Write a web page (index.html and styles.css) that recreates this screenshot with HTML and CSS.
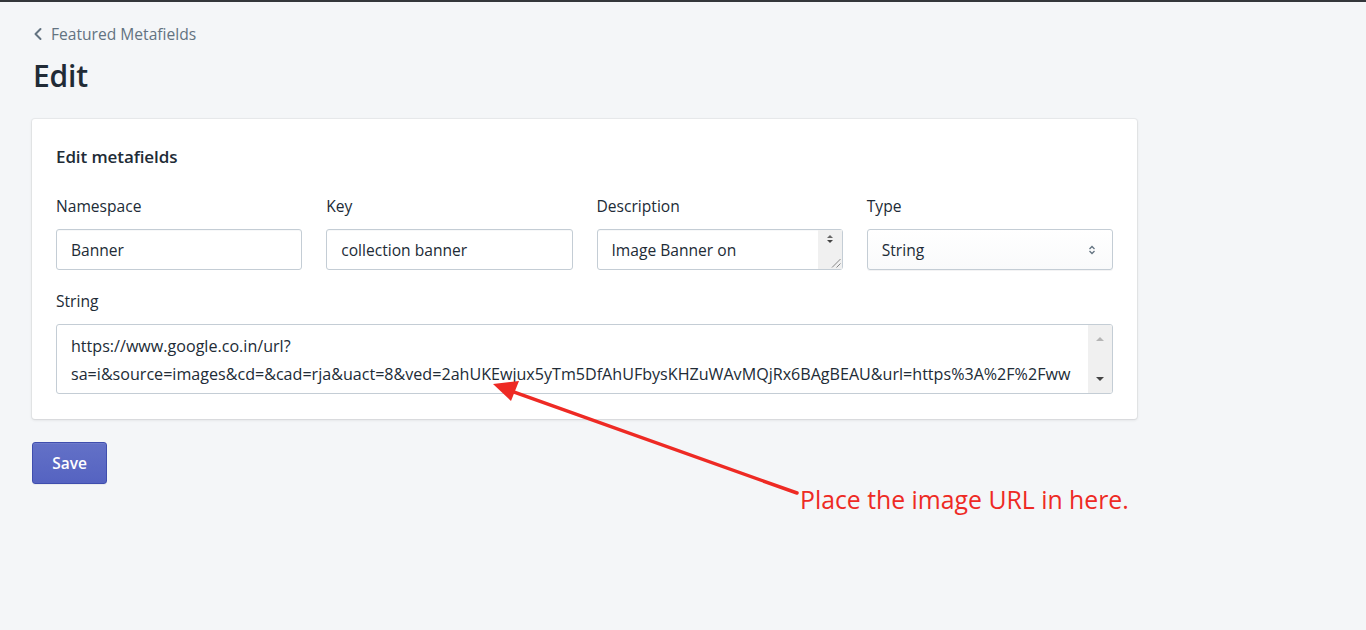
FILE: index.html
```html
<!DOCTYPE html>
<html lang="en">
<head>
<meta charset="utf-8">
<title>Edit metafields</title>
<link rel="stylesheet" href="styles.css">
</head>
<body>
<div class="page">
  <a class="breadcrumb" href="#">
    <svg class="chev" width="10" height="14" viewBox="0 0 10 14"><path d="M7.5 2 L2.5 7 L7.5 12" fill="none" stroke="#637381" stroke-width="2" stroke-linecap="round" stroke-linejoin="round"/></svg>
    <span>Featured Metafields</span>
  </a>
  <h1 class="title">Edit</h1>

  <section class="card">
    <h2 class="card-title">Edit metafields</h2>
    <div class="grid">
      <div class="field">
        <label class="label">Namespace</label>
        <div class="input">Banner</div>
      </div>
      <div class="field">
        <label class="label">Key</label>
        <div class="input">collection banner</div>
      </div>
      <div class="field">
        <label class="label">Description</label>
        <div class="input input-area">
          <span>Image Banner on</span>
          <div class="mini-scroll">
            <svg width="8" height="12" viewBox="0 0 8 12"><path d="M1 5 L4 2 L7 5 Z" fill="#666"/><path d="M1 7 L4 10 L7 7 Z" fill="#444"/></svg>
            <svg class="grip" width="14" height="14" viewBox="0 0 14 14"><path d="M12.5 4 L4 12.5 M12.5 8.5 L8.5 12.5" stroke="#888" stroke-width="1"/></svg>
          </div>
        </div>
      </div>
      <div class="field">
        <label class="label">Type</label>
        <div class="input select">
          <span>String</span>
          <svg width="8" height="12" viewBox="0 0 8 12"><path d="M1.5 5 L4 2.5 L6.5 5" fill="none" stroke="#637381" stroke-width="1.3"/><path d="M1.5 7 L4 9.5 L6.5 7" fill="none" stroke="#637381" stroke-width="1.3"/></svg>
        </div>
      </div>
    </div>

    <div class="field field-wide">
      <label class="label">String</label>
      <div class="textarea">
        <div class="ta-text">
          <div class="ta-line">https://www.google.co.in/url?</div>
          <div class="ta-line">sa=i&amp;source=images&amp;cd=&amp;cad=rja&amp;uact=8&amp;ved=2ahUKEwjux5yTm5DfAhUFbysKHZuWAvMQjRx6BAgBEAU&amp;url=https%3A%2F%2Fww</div>
        </div>
        <div class="scrollbar">
          <svg width="10" height="8" viewBox="0 0 10 8"><path d="M1 6 L5 2 L9 6 Z" fill="#b5b5b5"/></svg>
          <svg width="10" height="8" viewBox="0 0 10 8"><path d="M1 2 L5 6 L9 2 Z" fill="#444"/></svg>
        </div>
      </div>
    </div>
  </section>

  <button class="btn" type="button">Save</button>
</div>

<svg class="annot-arrow" width="1366" height="630" viewBox="0 0 1366 630">
  <line x1="797" y1="493" x2="508" y2="390" stroke="#ee2a24" stroke-width="3.5" stroke-linecap="round"/>
  <path d="M493 384 L519 381 L511 401 Z" fill="#ee2a24"/>
</svg>
<div class="annot-text">Place the image URL in here.</div>
</body>
</html>
```

FILE: styles.css
```css
html, body {
  margin: 0;
  padding: 0;
}
body {
  background: #f4f6f8;
  border-top: 2px solid #33373b;
  font-family: "Open Sans", "Noto Sans", sans-serif;
  color: #212b36;
  min-height: 628px;
  position: relative;
  overflow: hidden;
}
.page {
  padding: 22px 32px 0 32px;
}
.breadcrumb {
  display: flex;
  align-items: center;
  gap: 8px;
  color: #637381;
  text-decoration: none;
  font-size: 15.6px;
  height: 20px;
}
.chev {
  margin-left: 1px;
}
.title {
  margin: 14px 0 0 1px;
  font-size: 30px;
  font-weight: 600;
  line-height: 36px;
  letter-spacing: -0.2px;
}
.card {
  margin-top: 25px;
  width: 1105px;
  box-sizing: border-box;
  background: #fff;
  border-radius: 3px;
  box-shadow: 0 0 0 1px rgba(63,63,68,0.05), 0 1px 3px 0 rgba(63,63,68,0.15);
  padding: 26px 24px 25px 24px;
}
.card-title {
  margin: 0;
  font-size: 17px;
  font-weight: 600;
  line-height: 24px;
  letter-spacing: -0.1px;
}
.grid {
  margin-top: 27px;
  display: grid;
  grid-template-columns: repeat(4, 1fr);
  column-gap: 24px;
}
.field {
  display: flex;
  flex-direction: column;
}
.field-wide {
  margin-top: 21px;
}
.label {
  font-size: 15.6px;
  line-height: 20px;
  color: #212b36;
  margin-bottom: 13px;
}
.input {
  height: 41px;
  box-sizing: border-box;
  border: 1px solid #c4cdd5;
  border-radius: 3px;
  box-shadow: inset 0 1px 0 0 rgba(99,115,129,0.05);
  padding: 0 14px;
  display: flex;
  align-items: center;
  font-size: 15.6px;
  color: #212b36;
  background: #fff;
}
.input-area {
  position: relative;
  justify-content: space-between;
  padding-right: 0;
}
.mini-scroll {
  align-self: stretch;
  width: 24px;
  background: #f0f0f0;
  display: flex;
  flex-direction: column;
  align-items: center;
  justify-content: space-between;
  padding: 3px 0 0 0;
}
.mini-scroll .grip {
  align-self: flex-end;
}
.select {
  justify-content: space-between;
  padding-right: 16px;
  background: linear-gradient(#fff, #f9fafb);
  box-shadow: 0 1px 0 0 rgba(22,29,37,0.05);
}
.textarea {
  height: 70px;
  box-sizing: border-box;
  border: 1px solid #c4cdd5;
  border-radius: 3px;
  display: flex;
  overflow: hidden;
}
.ta-text {
  flex: 1;
  padding: 7px 0 0 14px;
  overflow: hidden;
}
.ta-line {
  white-space: nowrap;
  font-size: 16.1px;
  line-height: 28px;
}
.scrollbar {
  width: 24px;
  background: #f0f0f0;
  display: flex;
  flex-direction: column;
  align-items: center;
  justify-content: space-between;
  padding: 10px 0 10px 0;
}
.btn {
  margin-top: 23px;
  width: 75px;
  height: 42px;
  border: 1px solid #3f4eae;
  border-radius: 3px;
  background: linear-gradient(#6371c7, #5563c1);
  box-shadow: inset 0 1px 0 0 #6f7bcb, 0 1px 0 0 rgba(22,29,37,0.05);
  color: #fff;
  font-family: "Open Sans", "Noto Sans", sans-serif;
  font-size: 15.5px;
  font-weight: 600;
  cursor: pointer;
}
.annot-arrow {
  position: absolute;
  left: 0;
  top: -2px;
  pointer-events: none;
}
.annot-text {
  position: absolute;
  left: 800px;
  top: 481px;
  font-family: "Open Sans", "Noto Sans", sans-serif;
  font-size: 24.8px;
  line-height: 32px;
  color: #ee2a24;
}
```
